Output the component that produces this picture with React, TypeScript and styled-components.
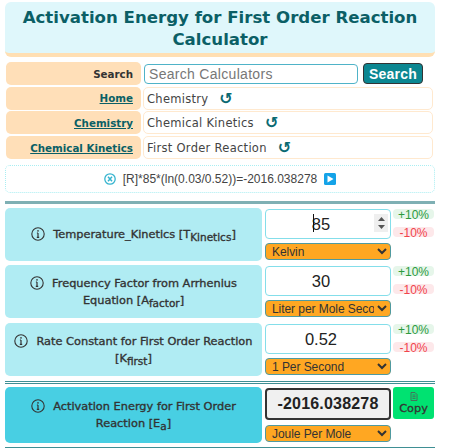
import React from "react";
import styled, { createGlobalStyle } from "styled-components";

const Global = createGlobalStyle`
  html, body { margin: 0; padding: 0; background: #fff; }
  body { font-family: "DejaVu Sans", Verdana, sans-serif; color: #333; overflow: hidden; }
  * { box-sizing: border-box; }
`;
const Page = styled.div`
  width: 450px; height: 448px; padding: 2px 15px 0 5px; display: flex; flex-direction: column; overflow: hidden;
  & > * { flex: none; }
`;
const TitleBox = styled.div`
  height: 55px; background: #dff7fb; border-bottom: 4px solid #ffdfb3; border-radius: 6px;
  padding-top: 5px;
`;
const Title = styled.h1`
  margin: 0; font: bold 16.6px/21.5px "DejaVu Sans", Verdana, sans-serif; color: #0b5f66; text-align: center;
`;
const Nav = styled.div`
  margin: 5px 2px 0 1px; display: grid; grid-template-columns: 135px 1fr; column-gap: 2px; row-gap: 1.7px;
`;
const NavLabel = styled.div`
  height: 23px; background: #ffdfb8; border-radius: 5px; padding-right: 8px;
  display: flex; align-items: center; justify-content: flex-end;
  font-size: 10.3px; font-weight: bold; color: #333;
`;
const NavLink = styled.a`
  color: #0b5f66; text-decoration: underline; cursor: pointer;
`;
const NavValue = styled.div`
  height: 23px; border: 1px solid #ffe9cf; border-radius: 5px; padding: 1px 0 0 3px;
  display: flex; align-items: center; font-size: 11.5px; color: #444; letter-spacing: .28px;
`;
const Refresh = styled.span`
  margin-left: 11px; color: #0b6a72; font-weight: bold; font-size: 16px; line-height: 1;
`;
const SearchRow = styled.div`
  display: flex; align-items: center; height: 23px; padding-left: 1px;
`;
const SearchInput = styled.input`
  width: 214px; height: 20px; border: 1px solid #4fb3c8; border-radius: 4px; padding: 0 4px;
  font: 14px "Liberation Sans", Arial, sans-serif; color: #333; letter-spacing: .3px; background: #fff;
  &::placeholder { color: #777; opacity: 1; }
`;
const SearchBtn = styled.button`
  margin-left: 5px; width: 60px; height: 21px; padding: 0; background: #0c8791; color: #fff;
  border: 1px solid #333; border-radius: 4px; font: bold 14px "Liberation Sans", Arial, sans-serif; letter-spacing: .2px;
`;
const ResultBar = styled.div`
  margin-top: 6px; height: 28px; border: 1px dotted #a9eef2; border-radius: 5px;
  display: flex; align-items: center; justify-content: center; gap: 7px;
  font: 12px "Liberation Sans", Arial, sans-serif; color: #444;
`;
const Rule = styled.div<{ $top: number; $dark?: boolean }>`
  margin-top: ${p => p.$top}px; height: 3px; background: ${p => (p.$dark ? "#3f8f94" : "#7fb0b4")};
`;
const DoubleRule = styled.div`
  margin-top: 5px; height: 3px; border-top: 1px solid #3f8f94; border-bottom: 1px solid #3f8f94;
`;
const Row = styled.div<{ $gap: number; $height?: number }>`
  margin-top: ${p => p.$gap}px; display: grid; grid-template-columns: 257px 127px 41px; column-gap: 2px;
  height: ${p => p.$height ?? 53}px;
`;
const Label = styled.div<{ $color: string }>`
  background: ${p => p.$color}; border-radius: 5px; padding: 0 2px; text-align: center;
  display: flex; align-items: center; justify-content: center;
  font-size: 11.35px; line-height: 17px; color: #333; -webkit-text-stroke: .35px #333;
`;
const LabelText = styled.div`
  sub { font-size: 10.5px; line-height: 0; vertical-align: -3px; }
  svg { vertical-align: -3px; margin-right: 8px; }
`;
const Field = styled.div`
  display: flex; flex-direction: column; position: relative; padding-left: 1px;
`;
const NumInput = styled.div`
  height: 30px; margin-top: 1px; border: 1px solid #84deea; border-radius: 4px; background: #fff; position: relative;
  display: flex; align-items: center; justify-content: center; padding-right: 14px;
  font: 16.5px "Liberation Sans", Arial, sans-serif; color: #222;
`;
const Caret = styled.span`
  position: absolute; left: 47px; top: 4px; width: 1px; height: 18px; background: #111;
`;
const Spin = styled.span`
  position: absolute; right: 2px; top: 4px; width: 14px; height: 18px; background: #efefef;
  display: flex; flex-direction: column; align-items: center; justify-content: center; gap: 4px;
`;
const ResultValue = styled.div`
  height: 32px; margin-top: 1px; border: 2px solid #333; border-radius: 4px; background: #f0f0f0;
  display: flex; align-items: center; justify-content: center; font: bold 16px "Liberation Sans", Arial, sans-serif; color: #222; letter-spacing: .2px;
`;
const Select = styled.select<{ $top: number }>`
  margin-top: ${p => p.$top}px; height: 17px; width: 126px; background: #ffa722; border: 1px solid #4f9aa0; border-radius: 4px;
  font: 12px "Liberation Sans", Arial, sans-serif; color: #333; padding: 0 0 0 2px; letter-spacing: -.06px;
`;
const PctCol = styled.div`
  display: flex; flex-direction: column; font: 12px "Liberation Sans", Arial, sans-serif; padding-top: 1px;
`;
const Plus = styled.div`
  height: 10px; padding-top: 1px; background: #e6f6ea; border-radius: 4px; color: #2d9a3e; display: flex; align-items: center; justify-content: center;
`;
const Minus = styled.div`
  margin-top: 8px; height: 10px; padding-top: 1px; background: #fde8ea; border-radius: 4px; color: #f0444c; display: flex; align-items: center; justify-content: center;
`;
const CopyBtn = styled.div`
  height: 32px; margin-top: 0; background: #00e271; border-radius: 3px; color: #333; font: 11.3px/1 "DejaVu Sans", sans-serif;
  -webkit-text-stroke: .3px #333;
  display: flex; flex-direction: column; align-items: center; justify-content: center; gap: 2px;
`;

const Info = () => (
  <svg width="14" height="14" viewBox="0 0 14 14" fill="none" stroke="#333" strokeWidth="1.1">
    <circle cx="7" cy="7" r="6.2" />
    <path d="M7 6v4.2M5.8 10.3h2.4M5.9 6h1.1" strokeWidth="1.2" />
    <circle cx="7" cy="3.9" r=".8" fill="#333" stroke="none" />
  </svg>
);
const Close = () => (
  <svg width="12" height="12" viewBox="0 0 12 12" fill="none">
    <circle cx="6" cy="6" r="5.2" stroke="#35b4cf" strokeWidth="1.3" />
    <path d="M4 3.8l4 4.4M8 3.8l-4 4.4" stroke="#35b4cf" strokeWidth="1.5" />
  </svg>
);
const Play = () => (
  <svg width="12" height="12" viewBox="0 0 12 12">
    <rect width="12" height="12" rx="1.5" fill="#14a3e8" />
    <path d="M3.5 2.5l6 3.5-6 3.5z" fill="#fff" />
  </svg>
);
const CopyIcon = () => (
  <svg width="8" height="9" viewBox="0 0 8 9" fill="none" stroke="#555" strokeWidth=".8">
    <path d="M1 .5h4l2 2v6H1zM2.5 3h3M2.5 4.7h3M2.5 6.4h3" />
  </svg>
);
const Arrows = () => (
  <>
    <svg width="7" height="4" viewBox="0 0 7 4"><path d="M3.5 0L7 4H0z" fill="#555" /></svg>
    <svg width="7" height="4" viewBox="0 0 7 4"><path d="M3.5 4L7 0H0z" fill="#555" /></svg>
  </>
);

const Percent = () => (
  <PctCol>
    <Plus>+10%</Plus>
    <Minus>-10%</Minus>
  </PctCol>
);

export default function App() {
  return (
    <Page>
      <Global />
      <TitleBox>
        <Title>Activation Energy for First Order Reaction<br />Calculator</Title>
      </TitleBox>
      <Nav>
        <NavLabel>Search</NavLabel>
        <SearchRow>
          <SearchInput placeholder="Search Calculators" />
          <SearchBtn>Search</SearchBtn>
        </SearchRow>
        <NavLabel><NavLink>Home</NavLink></NavLabel>
        <NavValue>Chemistry<Refresh>↺</Refresh></NavValue>
        <NavLabel><NavLink>Chemistry</NavLink></NavLabel>
        <NavValue>Chemical Kinetics<Refresh>↺</Refresh></NavValue>
        <NavLabel><NavLink>Chemical Kinetics</NavLink></NavLabel>
        <NavValue>First Order Reaction<Refresh>↺</Refresh></NavValue>
      </Nav>
      <ResultBar>
        <Close />
        <span>[R]*85*(ln(0.03/0.52))=-2016.038278</span>
        <Play />
      </ResultBar>
      <Rule $top={8} />
      <Row $gap={4}>
        <Label $color="#b0ecf3">
          <LabelText><Info />Temperature_Kinetics [T<sub>Kinetics</sub>]</LabelText>
        </Label>
        <Field>
          <NumInput>85<Caret /><Spin><Arrows /></Spin></NumInput>
          <Select $top={4} defaultValue="Kelvin"><option>Kelvin</option></Select>
        </Field>
        <Percent />
      </Row>
      <Row $gap={4}>
        <Label $color="#b0ecf3">
          <LabelText><Info />Frequency Factor from Arrhenius<br />Equation [A<sub>factor</sub>]</LabelText>
        </Label>
        <Field>
          <NumInput>30</NumInput>
          <Select $top={4} defaultValue="Liter per Mole Second"><option>Liter per Mole Second</option></Select>
        </Field>
        <Percent />
      </Row>
      <Row $gap={5}>
        <Label $color="#b0ecf3">
          <LabelText><Info />Rate Constant for First Order Reaction<br />[K<sub>first</sub>]</LabelText>
        </Label>
        <Field>
          <NumInput>0.52</NumInput>
          <Select $top={4} defaultValue="1 Per Second"><option>1 Per Second</option></Select>
        </Field>
        <Percent />
      </Row>
      <DoubleRule />
      <Row $gap={3} $height={56}>
        <Label $color="#48cfe3">
          <LabelText><Info />Activation Energy for First Order<br />Reaction [E<sub>a</sub>]</LabelText>
        </Label>
        <Field>
          <ResultValue>-2016.038278</ResultValue>
          <Select $top={5} defaultValue="Joule Per Mole"><option>Joule Per Mole</option></Select>
        </Field>
        <CopyBtn><CopyIcon />Copy</CopyBtn>
      </Row>
      <Rule $top={4} $dark />
    </Page>
  );
}
